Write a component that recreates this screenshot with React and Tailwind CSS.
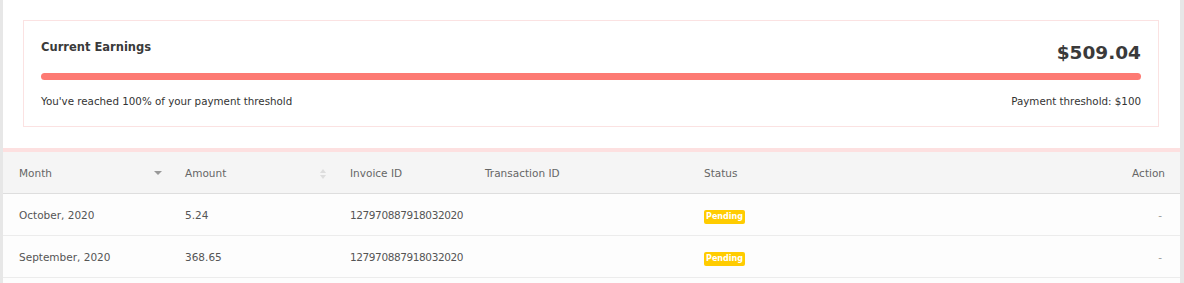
export default function App() {
  const rows = [
    { month: "October, 2020", amount: "5.24", invoice: "127970887918032020" },
    { month: "September, 2020", amount: "368.65", invoice: "127970887918032020" },
  ];

  return (
    <div
      className="flex w-full h-[283px] bg-white overflow-hidden"
      style={{ fontFamily: '"DejaVu Sans", "Noto Sans", sans-serif' }}
    >
      <div className="w-[3px] bg-[#e7e7e7]"></div>

      <div className="flex-1 flex flex-col">
        {/* Earnings card */}
        <div className="pt-[20px] pl-[20px] pr-[21px]">
          <div className="border border-[#fbe2e2] pt-[18px] pb-[18px] px-[17px]">
            <div className="flex justify-between items-start">
              <h2 className="text-[11.5px] leading-[16px] font-bold text-[#3a3a3a]">Current Earnings</h2>
              <div className="mt-[2px] text-[18.5px] leading-[24px] font-bold text-[#3a3a3a]">$509.04</div>
            </div>
            <div className="mt-[8px] h-[7px] rounded-full bg-[#fd7a73]"></div>
            <div className="mt-[14px] flex justify-between text-[10.3px] leading-[14px] text-[#333]">
              <span>You've reached 100% of your payment threshold</span>
              <span>Payment threshold: $100</span>
            </div>
          </div>
        </div>

        {/* Table */}
        <div className="mt-[21px] h-[4px] bg-[#fde0e0]"></div>
        <div className="flex h-[42px] pt-[2px] items-center bg-[#f5f5f5] border-b border-[#dedede] text-[10.5px] text-[#666]">
          <div className="w-[166px] pl-[16px] pr-[7px] flex items-center justify-between">
            <span>Month</span>
            <svg width="8" height="5" viewBox="0 0 8 5">
              <path d="M0 0 L8 0 L4 4 Z" fill="#999" />
            </svg>
          </div>
          <div className="w-[165px] pl-[16px] pr-[8px] flex items-center justify-between">
            <span>Amount</span>
            <svg width="6" height="10" viewBox="0 0 6 10">
              <path d="M0 4 L3 0 L6 4 Z" fill="#ddd" />
              <path d="M0 6 L3 10 L6 6 Z" fill="#ddd" />
            </svg>
          </div>
          <div className="w-[135px] pl-[16px]">Invoice ID</div>
          <div className="w-[219px] pl-[16px]">Transaction ID</div>
          <div className="flex-1 pl-[16px]">Status</div>
          <div className="pr-[15px]">Action</div>
        </div>

        {rows.map((r) => (
          <div
            key={r.month}
            className="flex h-[42px] pt-[2px] items-center bg-[#fdfdfd] border-b border-[#ececec] text-[10.5px] text-[#555]"
          >
            <div className="w-[166px] pl-[16px]">{r.month}</div>
            <div className="w-[165px] pl-[16px]">{r.amount}</div>
            <div className="w-[135px] pl-[16px] whitespace-nowrap tracking-[-0.4px]">{r.invoice}</div>
            <div className="w-[219px] pl-[16px]"></div>
            <div className="flex-1 pl-[16px]">
              <span className="inline-flex items-center justify-center w-[41px] h-[14px] rounded-[2px] bg-[#ffcc00] text-white text-[8px] font-bold">
                Pending
              </span>
            </div>
            <div className="pr-[18px] text-[#999]">-</div>
          </div>
        ))}
        <div className="flex-1 bg-[#fdfdfd]"></div>
      </div>

      <div className="w-[4px] bg-[#e7e7e7]"></div>
    </div>
  );
}
